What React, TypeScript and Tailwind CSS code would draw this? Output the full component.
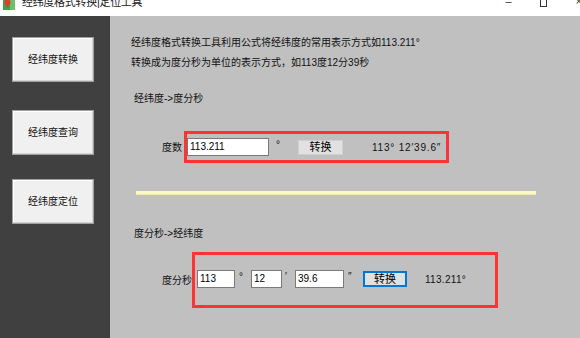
import React from 'react';

const FONT = { fontFamily: '"Liberation Sans", "Noto Sans CJK SC", sans-serif' };

function SideButton({ label, className = '' }: { label: string; className?: string }) {
  return (
    <button
      className={`w-[82px] h-[45px] bg-[#f0f0f0] border border-[#a0a0a0] shadow-[inset_-1px_-1px_0_#d4d4d4,inset_1px_1px_0_#ffffff] text-[10px] text-[#111] ${className}`}
    >
      {label}
    </button>
  );
}

function TextBox({ value, w }: { value: string; w: string }) {
  return (
    <div className={`${w} h-[18px] bg-white border border-[#7a7a7a] text-[10px] leading-[16px] pl-[2px] text-black`}>
      {value}
    </div>
  );
}

export default function App() {
  return (
    <div className="w-[580px] h-[338px] flex flex-col overflow-hidden" style={FONT}>
      {/* Title bar (cropped at top) */}
      <div className="h-[16px] bg-white flex items-start shrink-0 overflow-hidden">
        <svg width="12" height="10" viewBox="0 0 12 10" className="ml-[3px] mt-0">
          <rect x="0" y="0" width="12" height="10" fill="#3aa64a" />
          <rect x="7" y="0" width="5" height="10" fill="#6cc06a" />
          <circle cx="4.5" cy="2.5" r="3" fill="#e33b2f" />
          <path d="M2.5 4 L4.5 8 L6.5 4 Z" fill="#e33b2f" />
        </svg>
        <span className="ml-[7px] -mt-[5px] text-[11px] leading-[14px] text-[#222] tracking-[-0.3px]">
          经纬度格式转换|定位工具
        </span>
        <div className="flex-1" />
        <span className="mr-[28px] -mt-[6px] text-[11px] leading-[14px] text-[#333]">–</span>
        <div className="w-[7px] h-[7px] border border-[#333] border-t-0 mr-[29px]" />
        <span className="-mt-[6px] text-[11px] leading-[14px] text-[#333] -mr-[2px]">×</span>
      </div>

      <div className="flex flex-1">
        {/* Sidebar */}
        <div className="w-[110px] bg-[#404040] flex flex-col pl-[12px]">
          <SideButton label="经纬度转换" className="mt-[21px]" />
          <SideButton label="经纬度查询" className="mt-[28px]" />
          <SideButton label="经纬度定位" className="mt-[24px]" />
        </div>

        {/* Main */}
        <div className="flex-1 bg-[#c0c0c0] text-[10px] text-[#111]">
          <div className="pl-[21px] pt-[17px] leading-[20px]">
            <p>经纬度格式转换工具利用公式将经纬度的常用表示方式如113.211°</p>
            <p>转换成为度分秒为单位的表示方式，如113度12分39秒</p>
          </div>

          <p className="pl-[24px] mt-[16px] leading-[20px]">经纬度-&gt;度分秒</p>

          <div className="flex items-center mt-[22px] ml-[52px]">
            <span className="w-[20px] mr-[2px]">度数</span>
            <div className="w-[265px] h-[32px] border-[3px] border-[#ff3333] flex items-center">
              <TextBox value="113.211" w="w-[82px]" />
              <span className="ml-[7px] self-start mt-[3px]">°</span>
              <button className="ml-[18px] w-[45px] h-[15px] bg-[#e1e1e1] border border-[#d0d0d0] text-[11px] leading-[13px] text-black">
                转换
              </button>
              <span className="ml-[29px] text-[10px] tracking-[0.8px]">113° 12′39.6″</span>
            </div>
          </div>

          <div className="ml-[26px] mt-[28px] w-[400px] h-[4px] bg-[#fdf9c6] border-b border-[#efe9b0]" />

          <p className="pl-[24px] mt-[29px] leading-[20px]">度分秒-&gt;经纬度</p>

          <div className="flex items-center mt-[8px] ml-[52px]">
            <span className="w-[30px]">度分秒</span>
            <div className="w-[306px] h-[56px] border-[3px] border-[#ff3333] flex items-center pl-[2px] pb-[2px]">
              <TextBox value="113" w="w-[38px]" />
              <span className="ml-[4px] w-[12px] self-start mt-[14px]">°</span>
              <TextBox value="12" w="w-[31px]" />
              <span className="ml-[3px] w-[10px] self-start mt-[14px]">′</span>
              <TextBox value="39.6" w="w-[49px]" />
              <span className="ml-[4px] w-[15px] self-start mt-[14px]">″</span>
              <button className="w-[44px] h-[16px] bg-[#e1e1e1] border-2 border-[#0078d7] text-[11px] leading-[12px] text-black">
                转换
              </button>
              <span className="ml-[18px] tracking-[0.3px]">113.211°</span>
            </div>
          </div>
        </div>
      </div>
    </div>
  );
}
